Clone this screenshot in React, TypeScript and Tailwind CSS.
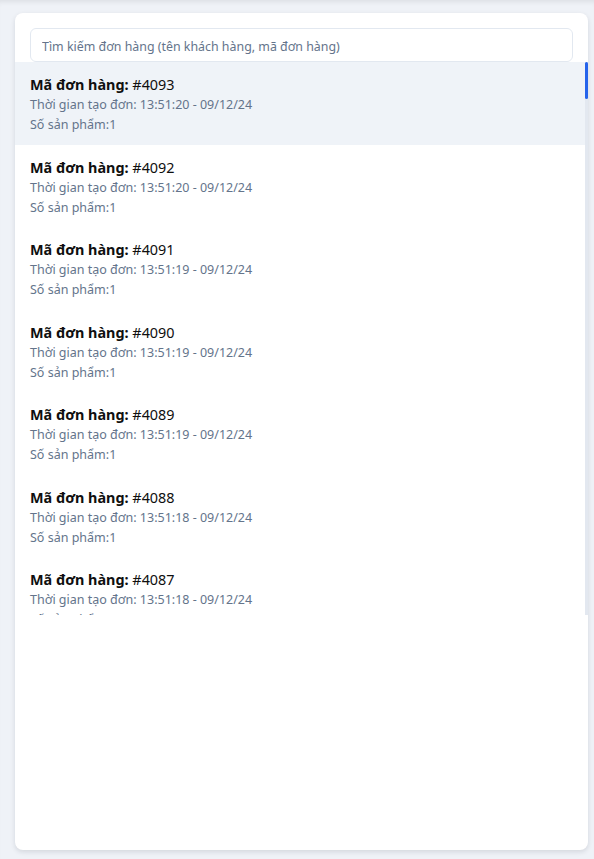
import { useState } from 'react'

type Order = {
  id: number
  createdAt: string
  itemCount: number
}

const times = ['13:51:20', '13:51:20', '13:51:19', '13:51:19', '13:51:19', '13:51:18', '13:51:18']

const orders: Order[] = Array.from({ length: 100 }, (_, i) => ({
  id: 4093 - i,
  createdAt: `${times[i] ?? '13:51:17'} - 09/12/24`,
  itemCount: 1,
}))

const LIST_H = 553
const THUMB_H = 37

export default function App() {
  const [query, setQuery] = useState('')
  const [selected, setSelected] = useState(4093)
  const [thumbTop, setThumbTop] = useState(0)

  const filtered = orders.filter((o) => String(o.id).includes(query.replace('#', '')))

  const onScroll = (e: React.UIEvent<HTMLDivElement>) => {
    const el = e.currentTarget
    const max = el.scrollHeight - el.clientHeight
    setThumbTop(max > 0 ? (el.scrollTop / max) * (LIST_H - THUMB_H) : 0)
  }

  return (
    <div
      className="min-h-screen bg-[#eff2f7] pl-[15px] pr-[6px] pt-[13px] pb-[9px] shadow-[inset_0_5px_5px_-3px_rgba(0,0,0,0.08)]"
      style={{ fontFamily: '"Noto Sans", "Liberation Sans", sans-serif' }}
    >
      <div className="h-[837px] bg-white rounded-lg shadow-[0_2px_5px_rgba(15,23,42,0.12)] flex flex-col overflow-hidden">
        <div className="px-[15px] pt-[15px]">
          <input
            value={query}
            onChange={(e) => setQuery(e.target.value)}
            placeholder="Tìm kiếm đơn hàng (tên khách hàng, mã đơn hàng)"
            className="w-full h-[34px] px-[11px] pt-[2px] rounded-md border border-[#e2e8f0] text-[12.4px] text-gray-800 placeholder:text-[#64748b] outline-none"
          />
        </div>

        <div className="relative h-[553px]">
          <div
            onScroll={onScroll}
            className="h-full overflow-y-auto pr-[3px] [scrollbar-width:none] [&::-webkit-scrollbar]:hidden"
          >
            {filtered.map((order) => (
              <div
                key={order.id}
                onClick={() => setSelected(order.id)}
                className={`px-[15px] pt-3 pb-[9.5px] cursor-pointer ${
                  selected === order.id ? 'bg-[#eff3f8]' : 'bg-white hover:bg-gray-50'
                }`}
              >
                <div className="text-[14.4px] leading-[21px] text-[#0f0f0f]">
                  <span className="font-bold">Mã đơn hàng:</span> #{order.id}
                </div>
                <div className="text-[12.5px] leading-5 text-[#64748b]">Thời gian tạo đơn: {order.createdAt}</div>
                <div className="text-[12.5px] leading-5 text-[#64748b]">Số sản phẩm:{order.itemCount}</div>
              </div>
            ))}
          </div>
          {/* custom scrollbar */}
          <div className="absolute right-0 top-0 h-full w-[3px] bg-[#e3e8f0]">
            <div className="absolute left-0 w-full bg-[#2563eb] rounded-sm" style={{ top: thumbTop, height: THUMB_H }} />
          </div>
        </div>
      </div>
    </div>
  )
}
